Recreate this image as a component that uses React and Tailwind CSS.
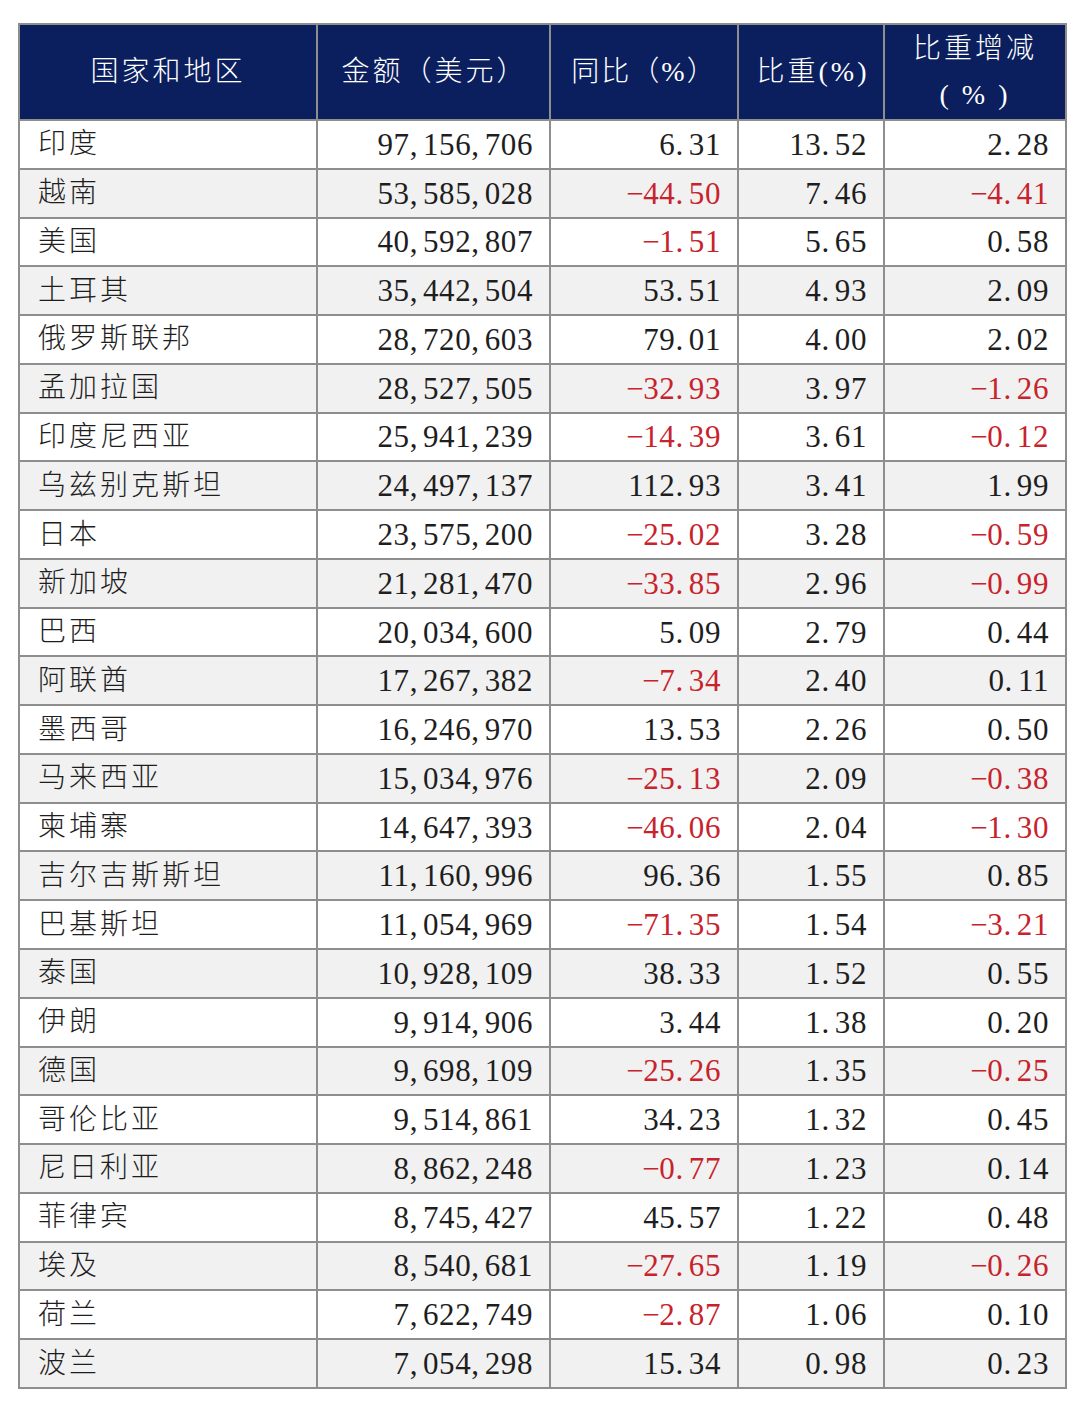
import React from "react";

const rows = [
  ["印度", "97,156,706", "6.31", "13.52", "2.28"],
  ["越南", "53,585,028", "-44.50", "7.46", "-4.41"],
  ["美国", "40,592,807", "-1.51", "5.65", "0.58"],
  ["土耳其", "35,442,504", "53.51", "4.93", "2.09"],
  ["俄罗斯联邦", "28,720,603", "79.01", "4.00", "2.02"],
  ["孟加拉国", "28,527,505", "-32.93", "3.97", "-1.26"],
  ["印度尼西亚", "25,941,239", "-14.39", "3.61", "-0.12"],
  ["乌兹别克斯坦", "24,497,137", "112.93", "3.41", "1.99"],
  ["日本", "23,575,200", "-25.02", "3.28", "-0.59"],
  ["新加坡", "21,281,470", "-33.85", "2.96", "-0.99"],
  ["巴西", "20,034,600", "5.09", "2.79", "0.44"],
  ["阿联酋", "17,267,382", "-7.34", "2.40", "0.11"],
  ["墨西哥", "16,246,970", "13.53", "2.26", "0.50"],
  ["马来西亚", "15,034,976", "-25.13", "2.09", "-0.38"],
  ["柬埔寨", "14,647,393", "-46.06", "2.04", "-1.30"],
  ["吉尔吉斯斯坦", "11,160,996", "96.36", "1.55", "0.85"],
  ["巴基斯坦", "11,054,969", "-71.35", "1.54", "-3.21"],
  ["泰国", "10,928,109", "38.33", "1.52", "0.55"],
  ["伊朗", "9,914,906", "3.44", "1.38", "0.20"],
  ["德国", "9,698,109", "-25.26", "1.35", "-0.25"],
  ["哥伦比亚", "9,514,861", "34.23", "1.32", "0.45"],
  ["尼日利亚", "8,862,248", "-0.77", "1.23", "0.14"],
  ["菲律宾", "8,745,427", "45.57", "1.22", "0.48"],
  ["埃及", "8,540,681", "-27.65", "1.19", "-0.26"],
  ["荷兰", "7,622,749", "-2.87", "1.06", "0.10"],
  ["波兰", "7,054,298", "15.34", "0.98", "0.23"],
];

function Num({ value }) {
  const neg = value.startsWith("-");
  const chars = value.split("");
  return (
    <span className={neg ? "text-[#c8232c]" : "text-[#1e1e1e]"}>
      {chars.map((c, i) => {
        if (c === "-") {
          return (
            <span key={i} className="inline-block w-[17px] text-center">
              −
            </span>
          );
        }
        if (c === "," || c === ".") {
          return (
            <span key={i} className="mr-[5px]">
              {c}
            </span>
          );
        }
        return <span key={i}>{c}</span>;
      })}
    </span>
  );
}

export default function App() {
  return (
    <div className="w-[1080px] h-[1408px] bg-white pt-[23px] pl-[18px] font-['Liberation_Serif','Noto_Sans_CJK_SC',serif]">
      <div className="inline-grid grid-cols-[296px_231px_186px_144px_180px] gap-[2px] p-[2px] bg-[#8e8e8e]">
        <div className="h-[94px] bg-[#0b1f5f] text-white text-[28px] font-light tracking-[3px] flex items-center justify-center">
          国家和地区
        </div>
        <div className="h-[94px] bg-[#0b1f5f] text-white text-[28px] font-light tracking-[3px] pl-[2px] flex items-center justify-center">
          金额（美元）
        </div>
        <div className="h-[94px] bg-[#0b1f5f] text-white text-[28px] font-light tracking-[2px] flex items-center justify-center">
          同比（%）
        </div>
        <div className="h-[94px] bg-[#0b1f5f] text-white text-[28px] font-light tracking-[3px] pl-[4px] flex items-center justify-center">
          比重(%)
        </div>
        <div className="h-[94px] bg-[#0b1f5f] text-white text-[28px] font-light tracking-[3px] leading-[46px] flex flex-col items-center justify-center">
          <span>比重增减</span>
          <span>( % )</span>
        </div>
        {rows.map((r, idx) => {
          const bg = idx % 2 === 0 ? "bg-white" : "bg-[#f1f1f1]";
          return (
            <React.Fragment key={idx}>
              <div
                className={`h-[46.77px] ${bg} flex items-center pl-[18px] text-[28px] font-light tracking-[3px] text-[#1e1e1e]`}
              >
                {r[0]}
              </div>
              {r.slice(1).map((v, j) => (
                <div
                  key={j}
                  className={`h-[46.77px] ${bg} flex items-center justify-end pr-[16px] text-[31px] tracking-[0.6px] leading-none`}
                >
                  <Num value={v} />
                </div>
              ))}
            </React.Fragment>
          );
        })}
      </div>
    </div>
  );
}
